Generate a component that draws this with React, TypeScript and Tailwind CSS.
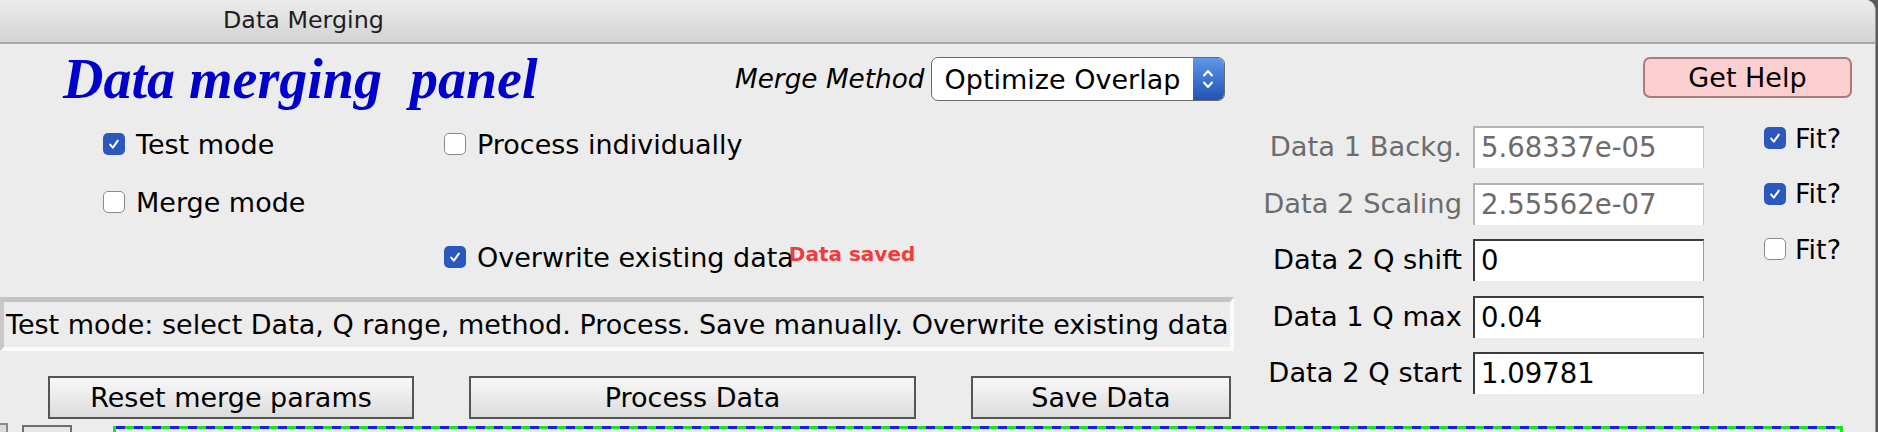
import React from "react";

function Box({ checked }: { checked: boolean }) {
  return checked ? (
    <span className="w-[22px] h-[22px] rounded-[5px] bg-[#2c58bd] flex items-center justify-center shrink-0">
      <svg width="14" height="14" viewBox="0 0 14 14">
        <path d="M3.2 7.6 L5.9 10.6 L10.8 3.6" stroke="white" strokeWidth="2" fill="none" strokeLinecap="round" strokeLinejoin="round" />
      </svg>
    </span>
  ) : (
    <span className="w-[22px] h-[22px] rounded-[5px] bg-white border border-[#8a8a8a] shrink-0" />
  );
}

function Check({ checked, label }: { checked: boolean; label: string }) {
  return (
    <div className="flex items-center">
      <Box checked={checked} />
      <span className="ml-[11px] text-[27px] leading-none whitespace-nowrap">{label}</span>
    </div>
  );
}

function Field({ label, value, disabled }: { label: string; value: string; disabled?: boolean }) {
  return (
    <div className="h-[42px] flex items-center justify-end">
      <span className={"text-[27.3px] leading-none whitespace-nowrap " + (disabled ? "text-[#6c6c6c]" : "text-black")}>{label}</span>
      <div
        className={
          "ml-[11px] w-[231px] h-[42px] bg-white flex items-center pl-[6px] text-[27.5px] leading-none " +
          (disabled
            ? "border-t-2 border-l-2 border-r border-t-[#b4b4b4] border-l-[#b4b4b4] border-r-[#c8c8c8] text-[#6c6c6c]"
            : "border-t-2 border-l-2 border-r border-t-[#3c3c3c] border-l-[#3c3c3c] border-r-[#9a9a9a] text-black")
        }
      >
        {value}
      </div>
    </div>
  );
}

function Btn({ label, w }: { label: string; w: string }) {
  return (
    <div className={"h-[43px] border-2 border-[#555555] bg-gradient-to-b from-[#f8f8f8] to-[#dcdcdc] flex items-center justify-center text-[27px] leading-none " + w}>
      {label}
    </div>
  );
}

export default function App() {
  return (
    <div className="w-[1878px] h-[432px] overflow-hidden bg-[#5a5a5a] font-['DejaVu_Sans',sans-serif] text-black">
      <div className="w-[1876px] h-[432px] bg-[#ececec] rounded-tr-[10px] overflow-hidden border-r border-[#9c9c9c] flex flex-col">
        {/* title bar */}
        <div className="h-[44px] shrink-0 bg-gradient-to-b from-[#ececec] to-[#d3d3d3] border-b-2 border-[#a8a8a8] flex items-center">
          <span className="ml-[223px] text-[23.8px] leading-none text-[#1e1e1e]">Data Merging</span>
        </div>

        {/* body */}
        <div className="flex h-[377px] shrink-0">
          {/* left column */}
          <div className="w-[1240px] shrink-0 flex flex-col">
            <div className="flex items-start h-[82px]">
              <div className="w-[735px] pl-[63px] pt-[7px] font-['Liberation_Serif',serif] font-bold italic text-[56px] leading-none text-[#0000cc] whitespace-pre">
                {"Data merging  panel"}
              </div>
              <div className="mt-[13px] flex items-center h-[44px]">
                <span className="italic text-[26.3px] leading-none whitespace-nowrap">Merge Method</span>
                <div className="ml-[6px] w-[294px] h-[44px] bg-white border border-[#6a6a6a] rounded-[7px] flex items-center overflow-hidden">
                  <span className="flex-1 pl-[13px] text-[27px] leading-none whitespace-nowrap">Optimize Overlap</span>
                  <div className="w-[31px] h-full bg-gradient-to-b from-[#6197e8] to-[#2252b5] flex flex-col items-center justify-center gap-[4px]">
                    <svg width="12" height="8" viewBox="0 0 12 8">
                      <path d="M2 6.5 L6 2 L10 6.5" stroke="white" strokeWidth="2" fill="none" strokeLinecap="round" strokeLinejoin="round" />
                    </svg>
                    <svg width="12" height="8" viewBox="0 0 12 8">
                      <path d="M2 1.5 L6 6 L10 1.5" stroke="white" strokeWidth="2" fill="none" strokeLinecap="round" strokeLinejoin="round" />
                    </svg>
                  </div>
                </div>
              </div>
            </div>

            {/* checkbox rows */}
            <div className="flex h-[36px] items-center">
              <div className="w-[444px] pl-[103px]">
                <Check checked label="Test mode" />
              </div>
              <Check checked={false} label="Process individually" />
            </div>
            <div className="flex h-[36px] items-center mt-[22px]">
              <div className="w-[444px] pl-[103px]">
                <Check checked={false} label="Merge mode" />
              </div>
            </div>
            <div className="flex h-[36px] items-center mt-[19px]">
              <div className="w-[444px]" />
              <Check checked label="Overwrite existing data" />
              <span className="-ml-[5px] mb-[6px] text-[20px] leading-none font-bold text-[#f03c3c] whitespace-nowrap">Data saved</span>
            </div>

            {/* status bar */}
            <div className="mt-[22px] w-[1234px] h-[54px] border-t-[5px] border-l-4 border-b-4 border-r-4 border-t-[#c4c4c4] border-l-[#c8c8c8] border-b-[#fafafa] border-r-[#fafafa] bg-[#ececec] flex items-center pl-[2px]">
              <span className="text-[27px] leading-none whitespace-nowrap">
                Test mode: select Data, Q range, method. Process. Save manually. Overwrite existing data
              </span>
            </div>

            {/* buttons */}
            <div className="mt-[25px] flex">
              <div className="ml-[48px]">
                <Btn label="Reset merge params" w="w-[366px]" />
              </div>
              <div className="ml-[55px]">
                <Btn label="Process Data" w="w-[447px]" />
              </div>
              <div className="ml-[55px]">
                <Btn label="Save Data" w="w-[260px]" />
              </div>
            </div>
          </div>

          {/* right column */}
          <div className="flex-1 flex flex-col">
            <div className="mt-[13px] ml-[403px] w-[209px] h-[41px] bg-[#fbcfcf] border-2 border-[#a97b7b] rounded-[7px] flex items-center justify-center text-[27px] leading-none">
              Get Help
            </div>
            <div className="mt-[28px] flex">
              <div className="w-[464px] flex flex-col gap-[14.5px]">
                <Field label="Data 1 Backg." value="5.68337e-05" disabled />
                <Field label="Data 2 Scaling" value="2.55562e-07" disabled />
                <Field label="Data 2 Q shift" value="0" />
                <Field label="Data 1 Q max" value="0.04" />
                <Field label="Data 2 Q start" value="1.09781" />
              </div>
              <div className="ml-[60px] mt-[1px] flex flex-col gap-[33.5px]">
                <div className="flex items-center h-[22px]">
                  <Box checked />
                  <span className="ml-[9px] text-[27px] leading-none">Fit?</span>
                </div>
                <div className="flex items-center h-[22px]">
                  <Box checked />
                  <span className="ml-[9px] text-[27px] leading-none">Fit?</span>
                </div>
                <div className="flex items-center h-[22px]">
                  <Box checked={false} />
                  <span className="ml-[9px] text-[27px] leading-none">Fit?</span>
                </div>
              </div>
            </div>
          </div>
        </div>

        {/* bottom strip (partially visible controls) */}
        <div className="h-[11px] shrink-0 flex items-end">
          <div className="w-[8px] h-[9px] border-t-2 border-r-2 border-[#8a8a8a] bg-[#d6dce6]" />
          <div className="ml-[14px] w-[50px] h-[7px] border-t-2 border-l-2 border-r-2 border-[#6e6e6e] bg-[#e6e6e6]" />
          <div className="ml-[41px] w-[1730px] h-[6px] border-l-[3px] border-r-[3px] border-[#1fe01f] flex flex-col">
            <div className="h-[3px] bg-[repeating-linear-gradient(90deg,#1a1aff_0px,#1a1aff_9px,#1fe01f_9px,#1fe01f_18px)]" />
          </div>
        </div>
      </div>
    </div>
  );
}
